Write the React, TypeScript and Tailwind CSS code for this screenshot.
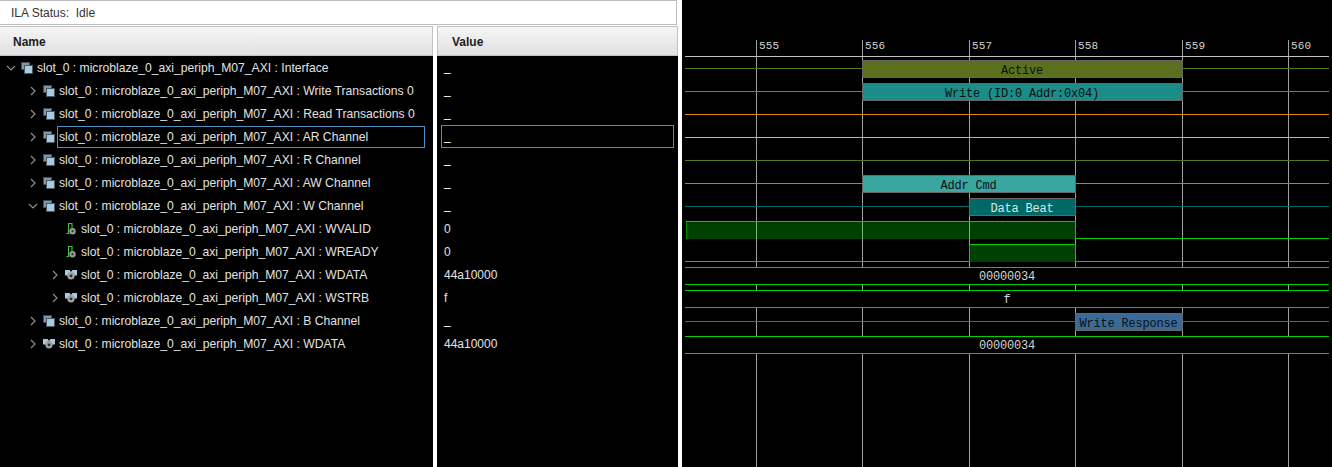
type Row = {
  label: string;
  depth: number;
  value: string;
  icon: "group" | "signal" | "bus";
  chevron?: "open" | "closed";
  selected?: boolean;
};

const prefix = "slot_0 : microblaze_0_axi_periph_M07_AXI : ";

const rows: Row[] = [
  { label: "Interface", depth: 0, value: "_", icon: "group", chevron: "open" },
  { label: "Write Transactions 0", depth: 1, value: "_", icon: "group", chevron: "closed" },
  { label: "Read Transactions 0", depth: 1, value: "_", icon: "group", chevron: "closed" },
  { label: "AR Channel", depth: 1, value: "_", icon: "group", chevron: "closed", selected: true },
  { label: "R Channel", depth: 1, value: "_", icon: "group", chevron: "closed" },
  { label: "AW Channel", depth: 1, value: "_", icon: "group", chevron: "closed" },
  { label: "W Channel", depth: 1, value: "_", icon: "group", chevron: "open" },
  { label: "WVALID", depth: 2, value: "0", icon: "signal" },
  { label: "WREADY", depth: 2, value: "0", icon: "signal" },
  { label: "WDATA", depth: 2, value: "44a10000", icon: "bus", chevron: "closed" },
  { label: "WSTRB", depth: 2, value: "f", icon: "bus", chevron: "closed" },
  { label: "B Channel", depth: 1, value: "_", icon: "group", chevron: "closed" },
  { label: "WDATA", depth: 1, value: "44a10000", icon: "bus", chevron: "closed" },
];

function Chevron({ open }: { open: boolean }) {
  return (
    <svg width="10" height="10" viewBox="0 0 10 10" fill="none" stroke="#8c8c8c" strokeWidth="1.2">
      {open ? <path d="M1 3l4 4 4-4" /> : <path d="M3 1l4 4-4 4" />}
    </svg>
  );
}

function TreeIcon({ kind }: { kind: Row["icon"] }) {
  if (kind === "group") {
    return (
      <svg width="12" height="12" viewBox="0 0 12 12" shapeRendering="crispEdges">
        <rect x="0" y="0" width="9" height="8" fill="#3f4d59" />
        <rect x="1" y="1" width="7" height="6" fill="#7f97ab" />
        <rect x="3" y="3" width="9" height="9" fill="#4b5560" />
        <rect x="4" y="4" width="7" height="7" fill="#a9cbe2" />
      </svg>
    );
  }
  if (kind === "signal") {
    return (
      <svg width="12" height="12" viewBox="0 0 12 12" fill="none">
        <path d="M1.5 10.5h2V.5H7v5" stroke="#46c246" strokeWidth="1.1" />
        <circle cx="7.5" cy="8.2" r="3.2" fill="#9a9a9a" />
        <circle cx="7.5" cy="8.2" r="1.1" fill="#303030" />
      </svg>
    );
  }
  return (
    <svg width="12" height="11" viewBox="0 0 12 11">
      <path d="M0 1h4.5l1.5 2 1.5-2H12v5.5H9V5H3v1.5H0z" fill="#a9cbe2" />
      <circle cx="6" cy="6.8" r="3.7" fill="#a0a0a0" />
      <circle cx="6" cy="6.8" r="1.4" fill="#2c2c2c" />
    </svg>
  );
}

function NameRow({ row }: { row: Row }) {
  const pad = row.depth * 22;
  return (
    <div className="flex h-[23px] items-center" style={{ paddingLeft: pad + 6 }}>
      <span className="flex w-[15px] shrink-0 items-center">
        {row.chevron ? <Chevron open={row.chevron === "open"} /> : null}
      </span>
      <TreeIcon kind={row.icon} />
      <span
        className={
          row.selected
            ? "ml-[2px] mr-[8px] flex h-[22px] flex-1 items-center self-end border border-[#4d8fc0] pl-px"
            : "ml-[2px] mr-[8px] flex h-[22px] flex-1 items-center self-end border border-transparent pl-px"
        }
      >
        {prefix + row.label}
      </span>
    </div>
  );
}

function ValueRow({ row }: { row: Row }) {
  return (
    <div
      className={
        row.selected
          ? "mx-[4px] flex h-[23px] items-center border border-[#4d8fc0] pb-[2px] pl-[2px] text-[12px] text-white"
          : row.value === "_"
            ? "mx-[4px] flex h-[23px] items-center border border-transparent pb-[2px] pl-[2px] text-[12px] text-white"
            : "mx-[4px] flex h-[23px] items-center border border-transparent pl-[2px] text-[12px]"
      }
    >
      {row.value}
    </div>
  );
}

function PanelHeader({ title, className }: { title: string; className: string }) {
  return (
    <div
      className={`flex h-[30px] items-center border border-[#c2c2c2] bg-gradient-to-b from-[#f5f5f5] to-[#e1e1e3] pt-px text-[12px] font-bold text-[#1c1c1c] ${className}`}
    >
      {title}
    </div>
  );
}

const gridX = [756, 862, 969, 1075, 1182, 1288];
const ticks = ["555", "556", "557", "558", "559", "560"];

const traces = [
  { y: 68, color: "#4f7a1a" },
  { y: 91, color: "#2a9590" },
  { y: 114, color: "#d98a00" },
  { y: 137, color: "#c8c820" },
  { y: 160, color: "#4f7a1a" },
  { y: 183, color: "#3aa6a0" },
  { y: 206, color: "#00686a" },
  { y: 321, color: "#3a6a96" },
];

const bars = [
  { x: 862, w: 320, y: 60, label: "Active", fill: "#5a701e", text: "#101010" },
  { x: 862, w: 320, y: 83, label: "Write (ID:0 Addr:0x04)", fill: "#1a8d88", text: "#101010" },
  { x: 862, w: 213, y: 175, label: "Addr Cmd", fill: "#3aa6a0", text: "#101010" },
  { x: 969, w: 106, y: 198, label: "Data Beat", fill: "#006865", text: "#d8e8e8" },
  { x: 1075, w: 107, y: 313, label: "Write Response", fill: "#3a6a96", text: "#101010" },
];

const buses = [
  { top: 267, label: "00000034", h: 17 },
  { top: 290, label: "f", h: 17 },
  { top: 336, label: "00000034", h: 17 },
];

const green = "#00d000";

function Waveform() {
  return (
    <svg
      className="block h-[467px] w-[650px] shrink-0 bg-black"
      viewBox="682 0 650 467"
      shapeRendering="crispEdges"
    >
      {gridX.map((x, i) => (
        <g key={x}>
          <line x1={x + 0.5} x2={x + 0.5} y1={40} y2={467} stroke="#a0a0a0" />
          <text
            x={x + 3}
            y={49}
            fill="#d4d4d4"
            fontSize="11"
            letterSpacing="0.1"
            fontFamily='"Liberation Mono", monospace'
          >
            {ticks[i]}
          </text>
        </g>
      ))}
      <line x1={685} x2={1329} y1={56.5} y2={56.5} stroke="#c0c0c0" />
      {traces.map((t) => (
        <line key={t.y} x1={685} x2={1329} y1={t.y + 0.5} y2={t.y + 0.5} stroke={t.color} />
      ))}

      {bars.map((b) => (
        <g key={b.label}>
          <rect x={b.x + 0.5} y={b.y + 0.5} width={b.w} height={17} fill={b.fill} stroke="#666666" />
          <text
            x={b.x + b.w / 2}
            y={b.y + 14}
            textAnchor="middle"
            fill={b.text}
            fontSize="12"
            letterSpacing="-0.2"
            fontFamily='"Liberation Mono", monospace'
          >
            {b.label}
          </text>
        </g>
      ))}

      {/* WVALID */}
      <rect x={686} y={222} width={389} height={17} fill="#00ff00" opacity="0.25" />
      <path d="M686.5 239V221.5H1075.5V238.5H1329" fill="none" stroke={green} />
      <line x1={686.5} x2={686.5} y1={222} y2={239} stroke="#008a00" />

      {/* WREADY */}
      <rect x={969} y={245} width={106} height={17} fill="#00ff00" opacity="0.25" />
      <path d="M685 261.5H969.5V244.5H1075.5V261.5H1329" fill="none" stroke={green} />

      {/* bus rows hide the grid between their rails */}
      {buses.map((b) => (
        <g key={b.top}>
          <rect x={685} y={b.top} width={644} height={b.h} fill="#000000" />
          <line x1={685} x2={1329} y1={b.top + 0.5} y2={b.top + 0.5} stroke={green} />
          <line x1={685} x2={1329} y1={b.top + b.h + 0.5} y2={b.top + b.h + 0.5} stroke={green} />
          <text
            x={1007}
            y={b.top + 13}
            textAnchor="middle"
            fill="#d4d4d4"
            fontSize="12"
            letterSpacing="-0.2"
            fontFamily='"Liberation Mono", monospace'
          >
            {b.label}
          </text>
        </g>
      ))}
    </svg>
  );
}

export default function App() {
  return (
    <div className="flex h-[467px] w-[1332px] overflow-hidden bg-white font-['Liberation_Sans',Arial,sans-serif] text-[12.15px]">
      <div className="flex w-[682px] shrink-0 flex-col">
        <div className="mr-[5px] flex h-[25px] shrink-0 items-center border-y border-r border-[#bdbdbd] pl-[11px] pt-px text-[12px] text-[#333333]">
          ILA Status:&nbsp; Idle
        </div>
        <div className="mt-px flex min-h-0 flex-1">
          <div className="flex w-[433px] shrink-0 flex-col">
            <PanelHeader title="Name" className="border-l-0 pl-[13px]" />
            <div className="flex-1 bg-black text-[#e2e2e2]">
              {rows.map((r, i) => (
                <NameRow key={i} row={r} />
              ))}
            </div>
          </div>
          <div className="ml-[4px] flex w-[241px] shrink-0 flex-col">
            <PanelHeader title="Value" className="pl-[14px]" />
            <div className="flex-1 bg-black text-[#e2e2e2]">
              {rows.map((r, i) => (
                <ValueRow key={i} row={r} />
              ))}
            </div>
          </div>
        </div>
      </div>
      <Waveform />
    </div>
  );
}
